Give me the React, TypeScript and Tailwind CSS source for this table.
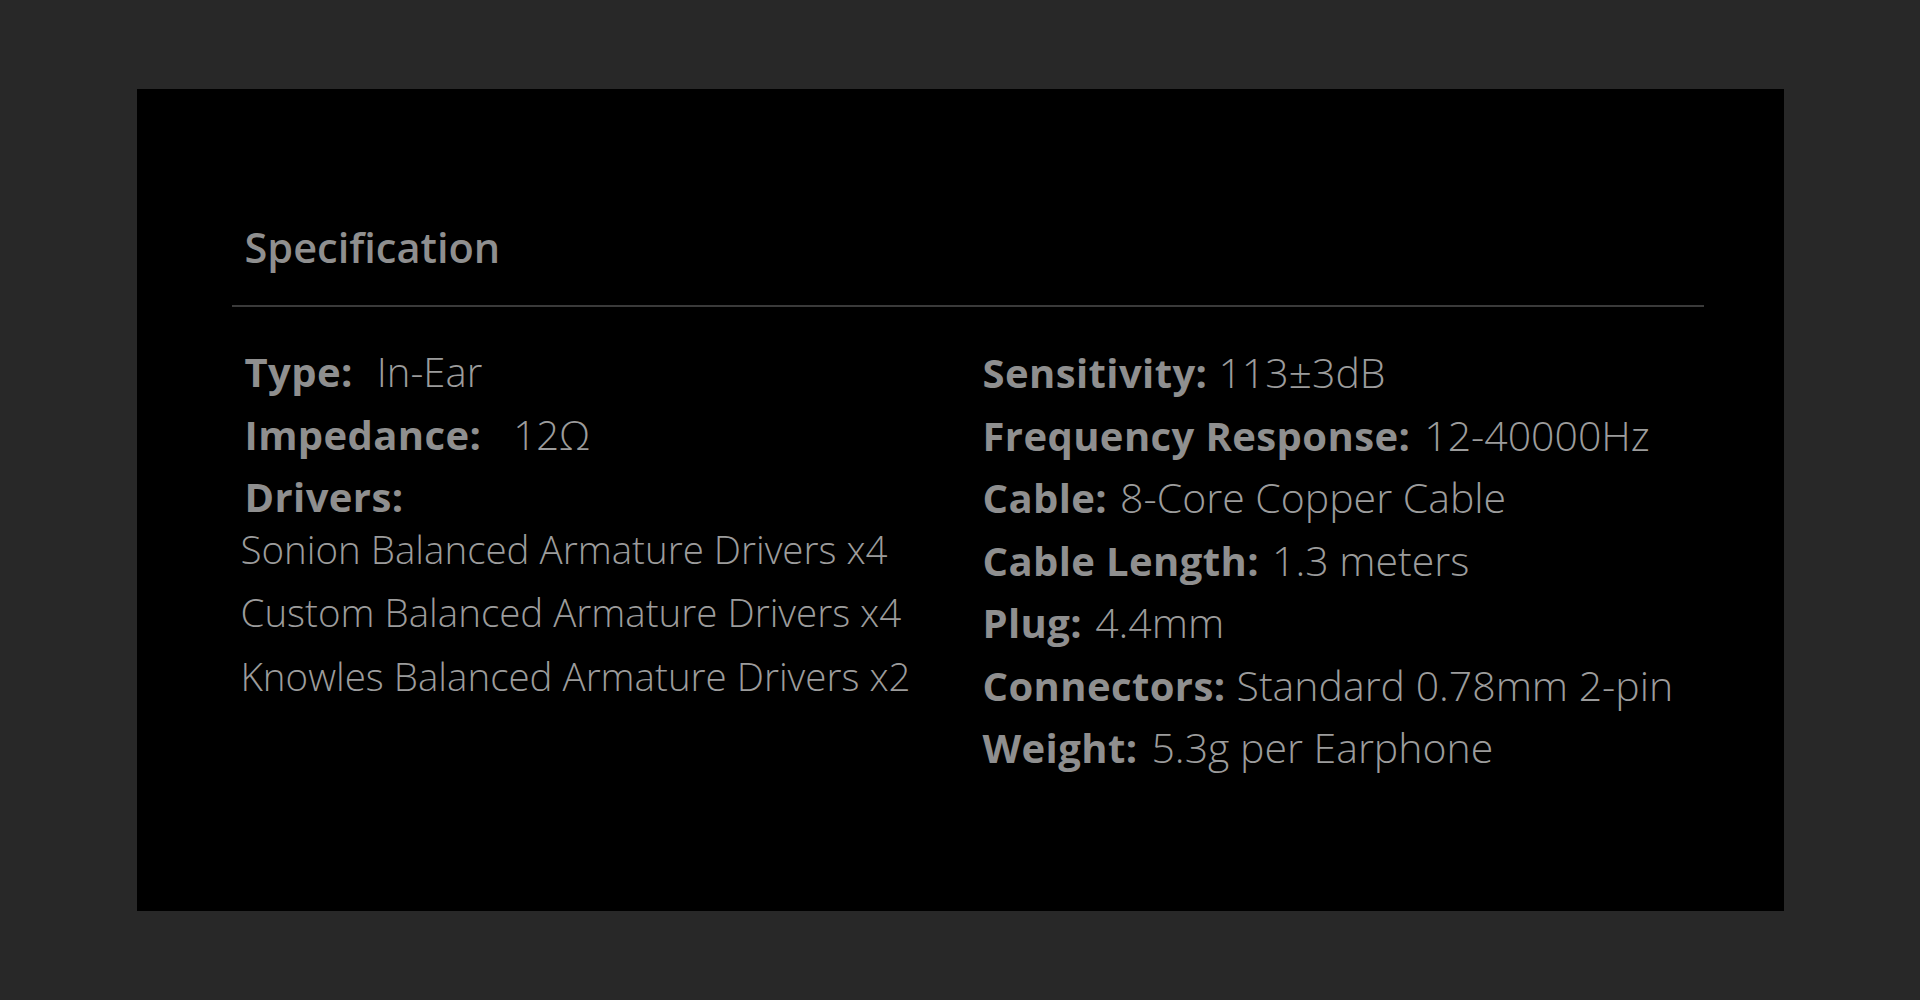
import React from "react";

type Spec = { label: string; value: string; gap: string; size: string };

const leftSpecs: Spec[] = [
  { label: "Type:", value: "In-Ear", gap: "ml-[24px]", size: "text-[40px]" },
  { label: "Impedance:", value: "12Ω", gap: "ml-[32px]", size: "text-[40px]" },
];

const drivers = [
  "Sonion Balanced Armature Drivers x4",
  "Custom Balanced Armature Drivers x4",
  "Knowles Balanced Armature Drivers x2",
];

const rightSpecs: Spec[] = [
  { label: "Sensitivity:", value: "113±3dB", gap: "ml-[11px]", size: "text-[41px]" },
  { label: "Frequency Response:", value: "12-40000Hz", gap: "ml-[14px]", size: "text-[41px]" },
  { label: "Cable:", value: "8-Core Copper Cable", gap: "ml-[13px]", size: "text-[41px]" },
  { label: "Cable Length:", value: "1.3 meters", gap: "ml-[13px]", size: "text-[41px]" },
  { label: "Plug:", value: "4.4mm", gap: "ml-[13px]", size: "text-[41px]" },
  { label: "Connectors:", value: "Standard 0.78mm 2-pin", gap: "ml-[11px]", size: "text-[41px]" },
  { label: "Weight:", value: "5.3g per Earphone", gap: "ml-[14px]", size: "text-[41px]" },
];

const SpecRow = ({ label, value, gap, size }: Spec) => {
  return (
    <div className="h-[62.5px] leading-[62.5px] whitespace-nowrap">
      <span className="text-[40px] font-bold tracking-[0.4px] text-[#8f8f8f]">{label}</span>
      <span className={`font-light text-[#9c9c9c] ${size} ${gap}`}>{value}</span>
    </div>
  );
};

export default function App() {
  return (
    <div
      className="min-h-screen bg-[#282828] flex items-center justify-center"
      style={{ fontFamily: '"Open Sans", "Noto Sans", sans-serif' }}
    >
      <div className="w-[1647px] h-[822px] bg-black pl-[95px] pr-[80px] pt-[128px]">
        <h2 className="pl-[13px] h-[60px] leading-[60px] text-[41.5px] font-semibold text-[#8f8f8f]">
          Specification
        </h2>
        <div className="mt-[28px] h-[2px] bg-[#3a3a3a]" />
        <div className="flex mt-[34px]">
          {/* left column */}
          <div className="w-[751px] pl-[13px]">
            {leftSpecs.map((s) => (
              <SpecRow key={s.label} {...s} />
            ))}
            <div className="h-[62.5px] leading-[62.5px] text-[40px] font-bold tracking-[0.4px] text-[#8f8f8f]">
              Drivers:
            </div>
            <div className="-mt-[11px] -ml-[4px]">
              {drivers.map((d) => (
                <div
                  key={d}
                  className="h-[63.5px] leading-[63.5px] text-[38.5px] font-light text-[#9c9c9c] whitespace-nowrap"
                >
                  {d}
                </div>
              ))}
            </div>
          </div>
          {/* right column */}
          <div className="flex-1">
            {rightSpecs.map((s) => (
              <SpecRow key={s.label} {...s} />
            ))}
          </div>
        </div>
      </div>
    </div>
  );
}
